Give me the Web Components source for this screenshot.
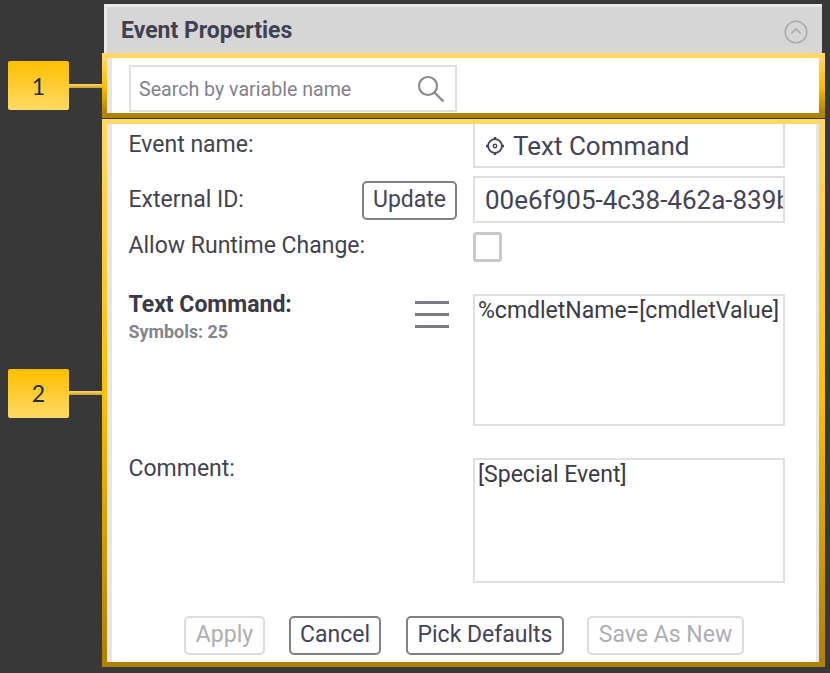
<!DOCTYPE html>
<html>
<head>
<meta charset="utf-8">
<title>Event Properties</title>
<style>
html, body { margin: 0; background: #383838; }
body { width: 830px; height: 673px; overflow: hidden; font-family: Roboto, "Liberation Sans", sans-serif; color: #43434f; }
</style>
</head>
<body>
<props-page>
    <panel-header>Event Properties</panel-header>
    <callout-row num="1" inner="55">
        <search-box placeholder="Search by variable name"></search-box>
    </callout-row>
    <callout-row num="2" inner="538" strip>
        <form-row top="0" height="44" shift="4">
            <span slot="label">Event name:</span>
            <text-field cut><gear-icon></gear-icon>Text Command</text-field>
        </form-row>
        <form-row top="8" height="47">
            <span slot="label">External ID:</span>
            <app-button slot="action" strong style="margin-top:2px">Update</app-button>
            <text-field>00e6f905-4c38-462a-839b</text-field>
        </form-row>
        <form-row top="9" height="30" shift="4">
            <span slot="label">Allow Runtime Change:</span>
            <check-box></check-box>
        </form-row>
        <form-row top="32" height="132" align="top">
            <stack-label slot="label">Text Command:<span slot="note">Symbols: 25</span></stack-label>
            <menu-icon slot="action"></menu-icon>
            <text-area>%cmdletName=[cmdletValue]</text-area>
        </form-row>
        <form-row top="32" height="125" align="top">
            <span slot="label">Comment:</span>
            <text-area>[Special Event]</text-area>
        </form-row>
        <button-bar>
            <app-button style="width:81px">Apply</app-button>
            <app-button strong style="width:92px">Cancel</app-button>
            <app-button strong style="width:158px;margin:0 -1px 0 1px">Pick Defaults</app-button>
            <app-button style="width:157px">Save As New</app-button>
        </button-bar>
    </callout-row>
</props-page>

<script>
class PropsPage extends HTMLElement {
    constructor() {
        super();
        this.attachShadow({ mode: 'open' })
    }
    connectedCallback() {
        this.shadowRoot.innerHTML = /*HTML*/ `
            <style>
                :host{ display: flex; flex-direction: column; padding-top: 4px; }
            </style>
            <slot></slot>
        `;
    }
}

class PanelHeader extends HTMLElement {
    constructor() {
        super();
        this.attachShadow({ mode: 'open' })
    }
    connectedCallback() {
        this.shadowRoot.innerHTML = /*HTML*/ `
            <style>
                :host{
                    display: flex;
                    align-items: center;
                    justify-content: space-between;
                    box-sizing: border-box;
                    width: 718px;
                    height: 49px;
                    margin-left: 104px;
                    padding: 0 14px;
                    background: #d6d6d6;
                    border-top: 3px solid #e8e8e8;
                    border-left: 3px solid #e8e8e8;
                    font-size: 23px;
                    font-weight: 700;
                    color: #414152;
                }
                svg{ display: block; margin-top: 3px; }
            </style>
            <slot></slot>
            <svg width="24" height="24" viewBox="0 0 24 24" fill="none" stroke="#acacac" stroke-width="1.6">
                <circle cx="12" cy="12" r="10.8"/>
                <path d="M7 14 L12 9 L17 14"/>
            </svg>
        `;
    }
}

class CalloutRow extends HTMLElement {
    constructor() {
        super();
        this.attachShadow({ mode: 'open' })
    }
    connectedCallback() {
        const num = this.getAttribute('num');
        const inner = this.getAttribute('inner');
        const strip = this.hasAttribute('strip') ? '3px solid #e6e6e6' : 'none';
        this.shadowRoot.innerHTML = /*HTML*/ `
            <style>
                :host{ display: flex; align-items: center; padding-left: 8px; margin-bottom: 1px; }
                .tag{
                    width: 61px;
                    height: 49px;
                    display: flex;
                    place-items: center;
                    place-content: center;
                    flex: none;
                    border-radius: 2px;
                    background: linear-gradient(#ffc000, #ffd966);
                    font: 23px Lato, sans-serif;
                    color: #1f2a5c;
                }
                .line{
                    width: 33px;
                    height: 4px;
                    flex: none;
                    background: linear-gradient(#ffd966, #c9a227);
                }
                .box{
                    flex: none;
                    width: 723px;
                    box-sizing: border-box;
                    border: 5px solid;
                    border-right-width: 6px;
                    border-image: linear-gradient(#ffd966, #ffc000 50%, #ad8200) 1;
                    background: #fff;
                }
                .inner{
                    height: ${inner}px;
                    box-sizing: border-box;
                    display: flex;
                    flex-direction: column;
                    border-left: 5px solid #e6e6e6;
                    border-right: ${strip};
                    padding-left: 17px;
                }
            </style>
            <div class="tag">${num}</div>
            <div class="line"></div>
            <div class="box"><div class="inner"><slot></slot></div></div>
        `;
    }
}

class SearchBox extends HTMLElement {
    constructor() {
        super();
        this.attachShadow({ mode: 'open' })
    }
    connectedCallback() {
        this.shadowRoot.innerHTML = /*HTML*/ `
            <style>
                :host{
                    display: flex;
                    align-items: center;
                    justify-content: space-between;
                    box-sizing: border-box;
                    width: 328px;
                    height: 47px;
                    margin-top: 7px;
                    padding: 0 11px 0 8px;
                    border: 2px solid #e0e0e0;
                    font-size: 19.6px;
                    color: #82828c;
                }
                span{ padding-top: 1px; }
                svg{ display: block; }
            </style>
            <span>${this.getAttribute('placeholder')}</span>
            <svg width="27" height="27" viewBox="0 0 27 27" fill="none" stroke="#8b8b90" stroke-width="2.2">
                <circle cx="11" cy="11" r="9"/>
                <path d="M17.5 17.5 L26.5 26.5" stroke-width="2.4"/>
            </svg>
        `;
    }
}

class FormRow extends HTMLElement {
    constructor() {
        super();
        this.attachShadow({ mode: 'open' })
    }
    connectedCallback() {
        const top = this.getAttribute('align') === 'top';
        const shift = this.getAttribute('shift') || 0;
        this.shadowRoot.innerHTML = /*HTML*/ `
            <style>
                :host{
                    display: grid;
                    grid-template-columns: 233px 111px 312px;
                    height: ${this.getAttribute('height')}px;
                    margin-top: ${this.getAttribute('top')}px;
                    font-size: 23px;
                }
                .label{
                    display: flex;
                    align-items: ${top ? 'flex-start' : 'center'};
                    white-space: nowrap;
                    margin-left: -.5px;
                    padding-bottom: ${shift}px;
                }
                .action{
                    display: flex;
                    align-items: ${top ? 'flex-start' : 'center'};
                    justify-content: flex-end;
                    padding-right: 16px;
                }
                ::slotted([slot="label"]){
                    ${top ? 'margin-top: -3px;' : ''}
                }
            </style>
            <div class="label"><slot name="label"></slot></div>
            <div class="action"><slot name="action"></slot></div>
            <slot></slot>
        `;
    }
}

class StackLabel extends HTMLElement {
    constructor() {
        super();
        this.attachShadow({ mode: 'open' })
    }
    connectedCallback() {
        this.shadowRoot.innerHTML = /*HTML*/ `
            <style>
                :host{
                    display: flex;
                    flex-direction: column;
                    font-weight: 700;
                    color: #3a3a48;
                }
                ::slotted([slot="note"]){
                    font-size: 17.9px;
                    color: #84848c;
                    margin-top: 3px;
                }
            </style>
            <slot></slot>
            <slot name="note"></slot>
        `;
    }
}

class TextField extends HTMLElement {
    constructor() {
        super();
        this.attachShadow({ mode: 'open' })
    }
    connectedCallback() {
        this.shadowRoot.innerHTML = /*HTML*/ `
            <style>
                :host{
                    display: flex;
                    align-items: center;
                    gap: 8px;
                    box-sizing: border-box;
                    height: 100%;
                    padding-left: 10px;
                    overflow: hidden;
                    white-space: nowrap;
                    border: 2px solid #e0e0e0;
                    font-size: 26px;
                    color: #43435a;
                }
                :host([cut]){ border-top: none; padding-top: 2px; }
            </style>
            <slot></slot>
        `;
    }
}

class TextArea extends HTMLElement {
    constructor() {
        super();
        this.attachShadow({ mode: 'open' })
    }
    connectedCallback() {
        this.shadowRoot.innerHTML = /*HTML*/ `
            <style>
                :host{
                    display: block;
                    box-sizing: border-box;
                    height: 100%;
                    padding: 1px 4px 0 3px;
                    border: 2px solid #e0e0e0;
                    font-size: 23px;
                    line-height: 27px;
                    color: #3a3a48;
                    white-space: nowrap;
                }
            </style>
            <slot></slot>
        `;
    }
}

class CheckBox extends HTMLElement {
    constructor() {
        super();
        this.attachShadow({ mode: 'open' })
    }
    connectedCallback() {
        this.shadowRoot.innerHTML = /*HTML*/ `
            <style>
                :host{
                    display: block;
                    box-sizing: border-box;
                    width: 29px;
                    height: 30px;
                    border: 3px solid #c9c9c9;
                    border-radius: 3px;
                }
            </style>
        `;
    }
}

class AppButton extends HTMLElement {
    constructor() {
        super();
        this.attachShadow({ mode: 'open' })
    }
    connectedCallback() {
        this.shadowRoot.innerHTML = /*HTML*/ `
            <style>
                :host{
                    display: inline-flex;
                    place-items: center;
                    place-content: center;
                    flex: none;
                    box-sizing: border-box;
                    width: 95px;
                    height: 39px;
                    padding-bottom: 2px;
                    border: 2px solid #dcdcdc;
                    border-radius: 5px;
                    font-size: 23px;
                    color: #aeaeb4;
                    white-space: nowrap;
                }
                :host([strong]){
                    border-color: #80808a;
                    color: #43435a;
                }
            </style>
            <slot></slot>
        `;
    }
}

class ButtonBar extends HTMLElement {
    constructor() {
        super();
        this.attachShadow({ mode: 'open' })
    }
    connectedCallback() {
        this.shadowRoot.innerHTML = /*HTML*/ `
            <style>
                :host{
                    display: flex;
                    justify-content: center;
                    gap: 24px;
                    margin-top: 33px;
                    margin-left: -17px;
                }
            </style>
            <slot></slot>
        `;
    }
}

class GearIcon extends HTMLElement {
    constructor() {
        super();
        this.attachShadow({ mode: 'open' })
    }
    connectedCallback() {
        this.shadowRoot.innerHTML = /*HTML*/ `
            <style>
                :host{ display: block; flex: none; }
                svg{ display: block; }
            </style>
            <svg width="20" height="20" viewBox="0 0 20 20" fill="none" stroke="#43435a">
                <circle cx="10" cy="10" r="6.9" stroke-width="1.8"/>
                <circle cx="10" cy="10" r="1.7" stroke-width="1.4"/>
                <path d="M10 1 V3 M10 17 V19 M1 10 H3 M17 10 H19" stroke-width="2.4"/>
            </svg>
        `;
    }
}

class MenuIcon extends HTMLElement {
    constructor() {
        super();
        this.attachShadow({ mode: 'open' })
    }
    connectedCallback() {
        this.shadowRoot.innerHTML = /*HTML*/ `
            <style>
                :host{
                    display: flex;
                    flex-direction: column;
                    gap: 9px;
                    width: 34px;
                    margin-top: 7px;
                    margin-right: 8px;
                }
                i{ display: block; height: 3px; background: #7b7b83; }
            </style>
            <i></i><i></i><i></i>
        `;
    }
}

globalThis.customElements.define("props-page", PropsPage);
globalThis.customElements.define("panel-header", PanelHeader);
globalThis.customElements.define("callout-row", CalloutRow);
globalThis.customElements.define("search-box", SearchBox);
globalThis.customElements.define("form-row", FormRow);
globalThis.customElements.define("stack-label", StackLabel);
globalThis.customElements.define("text-field", TextField);
globalThis.customElements.define("text-area", TextArea);
globalThis.customElements.define("check-box", CheckBox);
globalThis.customElements.define("app-button", AppButton);
globalThis.customElements.define("button-bar", ButtonBar);
globalThis.customElements.define("gear-icon", GearIcon);
globalThis.customElements.define("menu-icon", MenuIcon);
</script>
</body>
</html>
